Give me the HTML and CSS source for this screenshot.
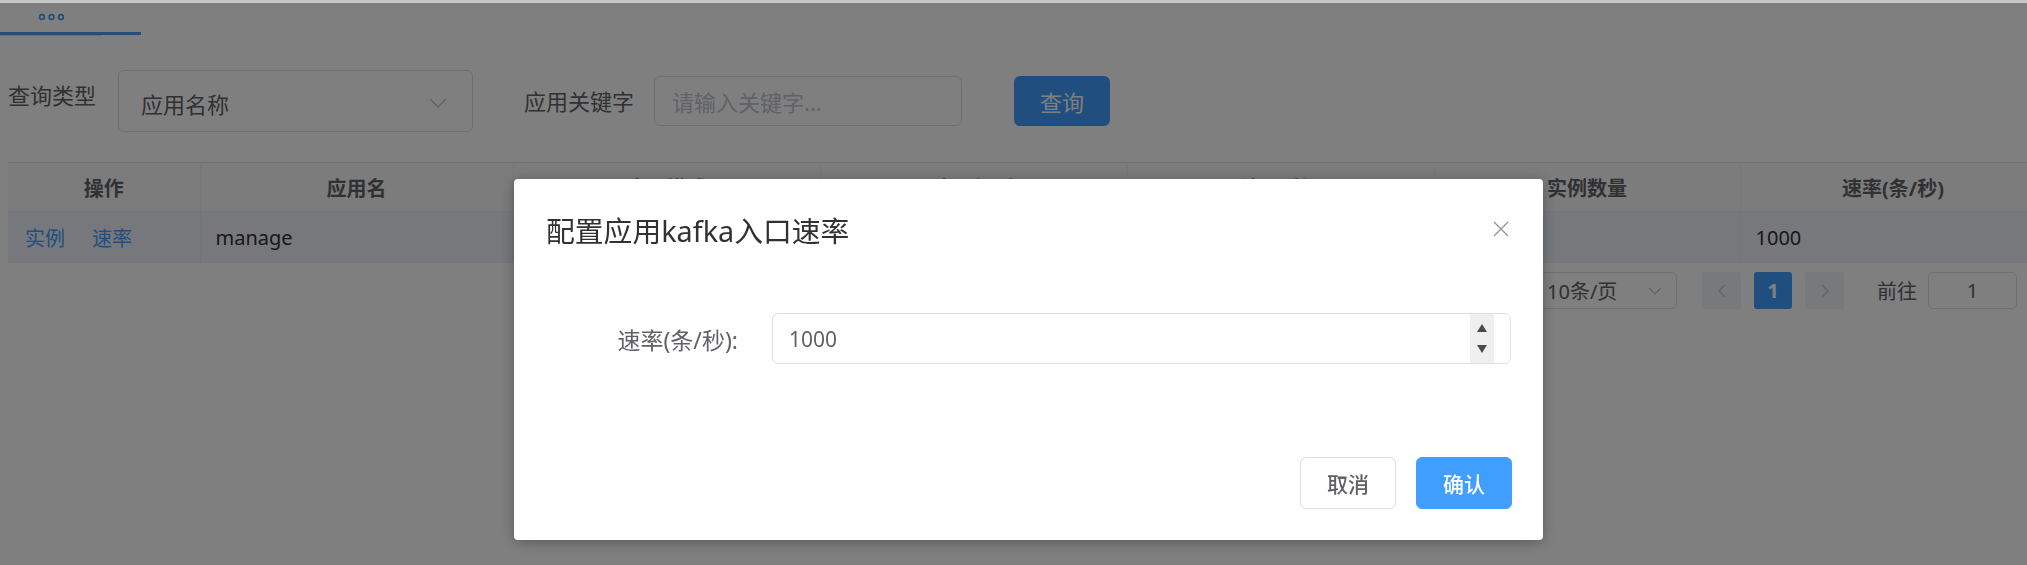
FILE: index.html
```html
<!DOCTYPE html>
<html lang="zh-CN">
<head>
<meta charset="utf-8">
<title>配置应用kafka入口速率</title>
<link rel="stylesheet" href="styles.css">
</head>
<body>
<div class="page">
  <div class="tabs">
    <div class="tab active">
      <svg class="dots" width="28" height="8" viewBox="0 0 28 8"><circle cx="4" cy="4" r="2.4" fill="none" stroke="#409eff" stroke-width="1.6"/><circle cx="13.5" cy="4" r="2.4" fill="none" stroke="#409eff" stroke-width="1.6"/><circle cx="23" cy="4" r="2.4" fill="none" stroke="#409eff" stroke-width="1.6"/></svg>
    </div>
  </div>
  <div class="tab-rule"></div>

  <div class="search">
    <span class="lbl lbl-type">查询类型</span>
    <div class="select">
      <span>应用名称</span>
      <svg width="18" height="10" viewBox="0 0 18 10"><path d="M1 1 L9 9 L17 1" fill="none" stroke="#c0c4cc" stroke-width="1.3"/></svg>
    </div>
    <span class="lbl lbl-key">应用关键字</span>
    <div class="kw-input">请输入关键字...</div>
    <button class="btn-query" type="button">查询</button>
  </div>

  <table class="grid">
    <colgroup>
      <col class="c1"><col class="c2"><col class="c3"><col class="c3"><col class="c3"><col class="c4"><col class="c4">
    </colgroup>
    <thead>
      <tr><th>操作</th><th>应用名</th><th>应用描述</th><th>应用级别</th><th>注册时间</th><th>实例数量</th><th>速率(条/秒)</th></tr>
    </thead>
    <tbody>
      <tr class="current"><td><a class="link">实例</a><a class="link">速率</a></td><td>manage</td><td></td><td></td><td></td><td>1</td><td>1000</td></tr>
    </tbody>
  </table>

  <div class="pager">
    <span class="total">共 1 条</span>
    <div class="size-select"><span>10条/页</span><svg width="14" height="8" viewBox="0 0 14 8"><path d="M1 1 L7 7 L13 1" fill="none" stroke="#c0c4cc" stroke-width="1.2"/></svg></div>
    <div class="pg-btn"><svg width="8" height="14" viewBox="0 0 8 14"><path d="M7 1 L1 7 L7 13" fill="none" stroke="#c0c4cc" stroke-width="1.2"/></svg></div>
    <div class="pg-num active">1</div>
    <div class="pg-btn"><svg width="8" height="14" viewBox="0 0 8 14"><path d="M1 1 L7 7 L1 13" fill="none" stroke="#c0c4cc" stroke-width="1.2"/></svg></div>
    <span class="jump">前往</span>
    <div class="jump-input">1</div>
  </div>
</div>

<div class="topline"></div>
<div class="mask"></div>

<div class="dialog">
  <div class="dlg-header">
    <span class="dlg-title">配置应用kafka入口速率</span>
    <button class="dlg-close" type="button" aria-label="关闭">
      <svg width="16" height="16" viewBox="0 0 16 16"><path d="M1 1 L15 15 M15 1 L1 15" stroke="#909399" stroke-width="1.3" fill="none"/></svg>
    </button>
  </div>
  <div class="dlg-body">
    <div class="form-item">
      <label class="form-label">速率(条/秒):</label>
      <div class="num-input">
        <span class="num-value">1000</span>
        <div class="spinner">
          <svg width="10" height="8" viewBox="0 0 10 8"><path d="M5 0 L10 8 L0 8 Z" fill="#4a4a4a"/></svg>
          <svg width="10" height="8" viewBox="0 0 10 8"><path d="M0 0 L10 0 L5 8 Z" fill="#4a4a4a"/></svg>
        </div>
      </div>
    </div>
  </div>
  <div class="dlg-footer">
    <button class="btn btn-default" type="button">取消</button>
    <button class="btn btn-primary" type="button">确认</button>
  </div>
</div>
</body>
</html>
```

FILE: styles.css
```css
* { box-sizing: border-box; }

html, body {
  margin: 0;
  padding: 0;
  width: 2027px;
  height: 565px;
  overflow: hidden;
  background: #ffffff;
  font-family: "Noto Sans", "Noto Sans CJK SC", sans-serif;
  color: #606266;
}

.page {
  width: 2060px;
  padding-left: 8px;
}

/* tabs */
.tabs {
  display: flex;
  margin-left: -8px;
  height: 35px;
}
.tab {
  width: 141px;
  height: 35px;
  padding: 2px 0 0 38px;
  display: flex;
  align-items: center;
}
.tab.active { border-bottom: 3px solid #409eff; }
.tab-rule {
  margin-left: -8px;
  width: 102px;
  height: 1px;
  background: #dcdfe6;
}

/* search form */
.search {
  display: flex;
  align-items: center;
  margin-top: 34px;
  height: 62px;
}
.lbl {
  font-size: 22px;
  line-height: 30px;
  color: #606266;
  white-space: nowrap;
}
.lbl-type { margin-bottom: 12px; }
.select {
  margin-left: 22px;
  width: 355px;
  height: 62px;
  border: 1px solid #dcdfe6;
  border-radius: 6px;
  display: flex;
  align-items: center;
  justify-content: space-between;
  padding: 4px 25px 0 22px;
  font-size: 22px;
  color: #606266;
}
.lbl-key { margin-left: 51px; }
.kw-input {
  margin-left: 20px;
  width: 308px;
  height: 50px;
  border: 1px solid #dcdfe6;
  border-radius: 6px;
  display: flex;
  align-items: center;
  padding-left: 17px;
  font-size: 22px;
  color: #c0c4cc;
}
.btn-query {
  margin-left: 52px;
  width: 96px;
  height: 50px;
  border: 0;
  border-radius: 6px;
  background: #409eff;
  color: #ffffff;
  font-family: inherit;
  font-size: 22px;
  padding: 0;
}

/* table */
.grid {
  margin-top: 30px;
  width: 2038px;
  table-layout: fixed;
  border-collapse: collapse;
  border-top: 1px solid #dfe3ec;
  font-size: 20px;
}
.c1 { width: 192px; }
.c2 { width: 313px; }
.c3 { width: 307px; }
.c4 { width: 306px; }
.grid th {
  height: 49px;
  padding: 0 15px;
  background: #f8f8f9;
  font-weight: 700;
  color: #606266;
  text-align: center;
  border-right: 1px solid #ebeef5;
  border-bottom: 1px solid #ebeef5;
  white-space: nowrap;
}
.grid td {
  height: 51px;
  padding: 0 15px;
  color: #303133;
  border-right: 1px solid #e4e8f0;
  border-bottom: 1px solid #ebeef5;
  white-space: nowrap;
}
.grid tr.current td { background: #ecf1f9; }
.grid td:first-child { padding-left: 17px; }
.link {
  color: #409eff;
  margin-right: 27px;
}

/* pagination */
.pager {
  margin-top: 9px;
  width: 2009px;
  height: 37px;
  display: flex;
  align-items: center;
  justify-content: flex-end;
  font-size: 20px;
  color: #606266;
}
.total { margin-right: 20px; }
.size-select {
  width: 145px;
  height: 37px;
  border: 1px solid #dcdfe6;
  border-radius: 5px;
  display: flex;
  align-items: center;
  justify-content: space-between;
  padding: 0 14px;
}
.pg-btn, .pg-num {
  height: 37px;
  display: flex;
  align-items: center;
  justify-content: center;
  border-radius: 3px;
  background: #f0f2f5;
}
.pg-btn { width: 39px; margin-left: 13px; }
.size-select + .pg-btn { margin-left: 25px; }
.pg-num {
  width: 38px;
  margin-left: 13px;
  font-weight: 700;
}
.pg-num.active { background: #409eff; color: #ffffff; }
.jump { margin-left: 33px; }
.jump-input {
  margin-left: 11px;
  width: 89px;
  height: 37px;
  border: 1px solid #dcdfe6;
  border-radius: 5px;
  display: flex;
  align-items: center;
  justify-content: center;
  color: #606266;
}

/* overlay */
.topline {
  position: fixed;
  left: 0;
  top: 0;
  width: 100%;
  height: 3px;
  background: #c6c6c6;
  z-index: 3;
}
.mask {
  position: fixed;
  inset: 0;
  background: rgba(0, 0, 0, 0.5);
  z-index: 1;
}

/* dialog */
.dialog {
  position: fixed;
  left: 514px;
  top: 179px;
  width: 1029px;
  height: 361px;
  background: #ffffff;
  border-radius: 4px;
  box-shadow: 0 2px 14px rgba(0, 0, 0, 0.3);
  z-index: 2;
  display: flex;
  flex-direction: column;
}
.dlg-header {
  padding: 34px 32px 0 32px;
  height: 70px;
  display: flex;
  align-items: flex-start;
  justify-content: space-between;
}
.dlg-title {
  font-size: 28.8px;
  line-height: 36px;
  color: #303133;
}
.dlg-close {
  margin-top: 8px;
  margin-right: 2px;
  border: 0;
  background: transparent;
  padding: 0;
  width: 16px;
  height: 16px;
  display: flex;
}
.dlg-body {
  padding: 64px 32px 0 32px;
}
.form-item {
  display: flex;
  align-items: center;
}
.form-label {
  width: 226px;
  padding-right: 34px;
  text-align: right;
  font-size: 23px;
  color: #606266;
  white-space: nowrap;
}
.num-input {
  flex: 1;
  height: 51px;
  border: 1px solid #dcdfe6;
  border-radius: 6px;
  display: flex;
  align-items: stretch;
  padding-right: 16px;
}
.num-value {
  flex: 1;
  display: flex;
  align-items: center;
  padding-left: 16px;
  font-size: 21px;
  color: #606266;
}
.spinner {
  width: 24px;
  background: #efefef;
  display: flex;
  flex-direction: column;
  align-items: center;
  justify-content: space-between;
  padding: 10px 0 10px;
}
.dlg-footer {
  margin-top: auto;
  padding: 0 31px 31px 0;
  display: flex;
  justify-content: flex-end;
  gap: 20px;
}
.btn {
  width: 96px;
  height: 52px;
  border-radius: 6px;
  font-family: inherit;
  font-size: 21px;
  font-weight: 500;
  padding: 0;
}
.btn-default {
  background: #ffffff;
  border: 1px solid #dcdfe6;
  color: #606266;
}
.btn-primary {
  background: #409eff;
  border: 1px solid #409eff;
  color: #ffffff;
}
```
